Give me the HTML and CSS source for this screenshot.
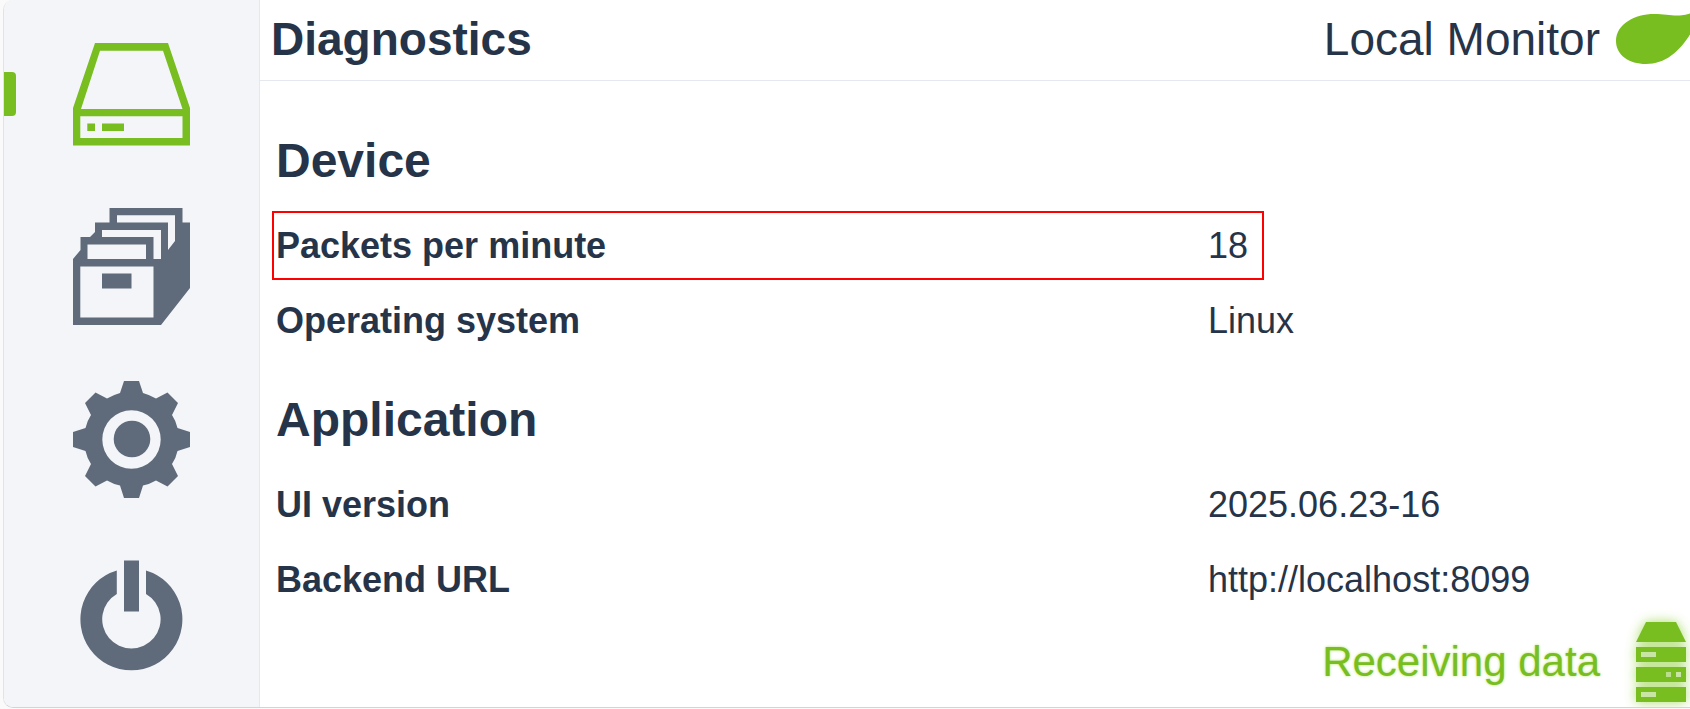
FILE: index.html
```html
<!DOCTYPE html>
<html lang="en">
<head>
<meta charset="utf-8">
<title>Diagnostics - Local Monitor</title>
<link rel="stylesheet" href="styles.css">
</head>
<body>
<div class="app">
  <nav class="sidebar" aria-label="Main">
    <a class="nav-item active" href="#device" aria-label="Device">
      <svg class="icon" viewBox="0 0 117 117"><path fill="currentColor" fill-rule="evenodd" d="M22 8H95L117 73V110.500H0V73ZM27 15.700L8 74H109.500L90 15.700ZM7.300 81.300V103H109.500V81.300ZM14.300 88.500H22V96H14.300ZM29 88.500H51V96H29Z"/></svg>
    </a>
    <a class="nav-item" href="#archive" aria-label="Archive">
      <svg class="icon" viewBox="0 0 117 117"><path fill="currentColor" fill-rule="evenodd" d="M36.500 0H109.500V14.500H117V80L88 117H0V51L7.500 42V29H17L22 24V14.500H36.500ZM44 7.300V14.500H95V42L102 33V7.300ZM29 22V29H80.500V51H88V22ZM14.500 36.500V51H73V36.500ZM7.300 58.500V109.500H80.500V58.500ZM29 65.500H58.500V80.500H29Z"/></svg>
    </a>
    <a class="nav-item" href="#settings" aria-label="Settings">
      <svg class="icon" viewBox="0 0 117 117"><path fill="currentColor" fill-rule="evenodd" d="M51 0H66L70 12Q77 14 83 17.500L94.500 11.500L105 22L99 34Q103 40 104.500 47L117 51V66L104.500 70Q103 77 99 83L105 95L94.500 105.500L83 99.500Q77 103 70 104.500L66 117H51L47 104.500Q40 103 34 99.500L22.500 105.500L12 95L18 83Q14 77 12.500 70L0 66V51L12.500 47Q14 40 18 34L12 22L22.500 11.500L34 17.500Q40 14 47 12ZM58.500 29.300A29.200 29.200 0 1 0 58.500 87.700A29.200 29.200 0 1 0 58.500 29.300Z"/><circle cx="59" cy="58" r="18.300" fill="currentColor"/></svg>
    </a>
    <a class="nav-item" href="#power" aria-label="Power">
      <svg class="icon" viewBox="0 0 117 117"><path fill="currentColor" d="M51 6.500H66V57.500H51ZM43.800 16.500V40A29.200 29.200 0 1 0 73 40V16.500A51 51 0 1 1 43.800 16.500Z"/></svg>
    </a>
  </nav>
  <div class="content">
    <header class="topbar">
      <h1 class="title">Diagnostics</h1>
      <div class="brand"><span>Local Monitor</span>
        <svg class="leaf" viewBox="0 0 74 50"><path fill="#78be20" d="M0 27C0 10 19 0 38 0C49 0 55 2 64 1.500Q70 1 74 -0.500V20.500C63 38 49 50 30 50C13 50 0 41 0 27Z"/></svg>
      </div>
    </header>
    <main class="main">
      <section>
        <h2 class="heading">Device</h2>
        <dl class="list">
          <div class="row highlighted"><dt>Packets per minute</dt><dd>18</dd></div>
          <div class="row"><dt>Operating system</dt><dd>Linux</dd></div>
        </dl>
      </section>
      <section>
        <h2 class="heading">Application</h2>
        <dl class="list">
          <div class="row"><dt>UI version</dt><dd>2025.06.23-16</dd></div>
          <div class="row"><dt>Backend URL</dt><dd>http://localhost:8099</dd></div>
        </dl>
      </section>
    </main>
    <footer class="status" role="status">
      <span>Receiving data</span>
      <svg class="server" viewBox="0 0 50 80"><path fill="#78be20" d="M10 0H40L50 20H0ZM0 25H50V40H0ZM0 45H50V60H0ZM0 65H50V80H0Z"/><path fill="#c9e5a6" d="M5 30H20V35H5ZM40 50H45V55H40ZM5 70H20V75H5Z"/><path fill="#b9de8c" d="M30 50H35V55H30Z"/></svg>
    </footer>
  </div>
</div>
</body>
</html>
```
FILE: styles.css
```css
* { box-sizing: border-box; }
body {
  margin: 0;
  background: #fafafa;
  color: #263449;
  font: 36px/44px "Liberation Sans", Arial, sans-serif;
}
.app {
  display: flex;
  min-height: calc(100vh - 1px);
  margin-left: 3px;
  border-left: 1px solid #e3e3e3;
  border-bottom: 1px solid #d4d4d4;
  border-radius: 10px 0 0 10px;
  background: #fff;
  overflow: hidden;
}
.sidebar {
  flex: 0 0 256px;
  display: flex;
  flex-direction: column;
  padding-top: 7px;
  border-right: 1px solid #e5e8ef;
  background: #f3f5f8;
}
.nav-item {
  position: relative;
  display: flex;
  flex: 0 0 173px;
  align-items: center;
  justify-content: center;
  color: #5f6b7b;
}
.nav-item.active { color: #78be20; }
.nav-item.active::before {
  content: "";
  position: absolute;
  left: 0;
  top: 65px;
  width: 12px;
  height: 44px;
  border-radius: 0 4px 4px 0;
  background: #78be20;
}
.icon { width: 117px; height: 117px; }
.content {
  flex: 1;
  min-width: 0;
  display: flex;
  flex-direction: column;
}
.topbar {
  display: flex;
  align-items: center;
  justify-content: space-between;
  height: 81px;
  padding: 0 0 2px 11px;
  border-bottom: 1px solid #e5e8ef;
  font-size: 46px;
}
.title { margin: 0; font-size: 46px; }
.brand { display: flex; align-items: center; gap: 16px; }
.leaf { width: 74px; height: 50px; overflow: visible; }
.main { flex: 1; padding: 44px 16px 0; }
.heading { margin: 0; font-size: 48px; line-height: 72px; }
.list { margin: 0; padding-top: 11px; }
.main section + section { margin-top: 26px; }
.row {
  position: relative;
  display: grid;
  grid-template-columns: 2fr 1fr;
  align-items: center;
  height: 75px;
}
dt { font-weight: 700; }
dd { margin: 0; white-space: nowrap; }
.highlighted::after {
  content: "";
  position: absolute;
  top: 3px;
  bottom: 3px;
  left: -4px;
  right: calc(100% / 3 - 56px);
  border: 2px solid #f00;
}
.status {
  display: flex;
  align-items: center;
  justify-content: flex-end;
  gap: 36px;
  padding: 0 4px 5px 0;
  color: #78be20;
  font-size: 42px;
  text-shadow: 0 0 3px #b4e070;
}
.server { width: 50px; height: 80px; overflow: visible; filter: drop-shadow(0 0 6px #a9dc68); }
```
